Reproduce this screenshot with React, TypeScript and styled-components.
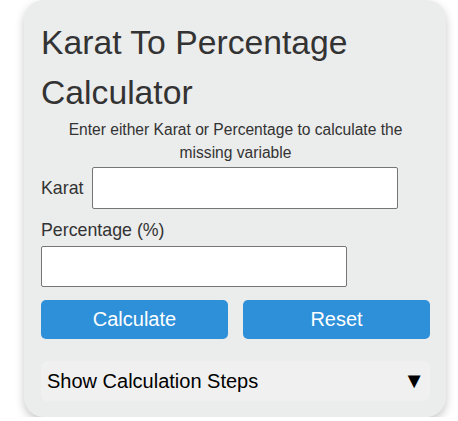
import React from "react";
import styled, { createGlobalStyle } from "styled-components";

const Global = createGlobalStyle`
  html, body {
    margin: 0;
    padding: 0;
    background: #ffffff;
  }
  body {
    font-family: "Liberation Sans", Arial, sans-serif;
  }
`;

const Card = styled.div`
  box-sizing: border-box;
  width: 422px;
  margin-left: 24px;
  padding: 16.5px 16px 16px 17px;
  background: #ebecec;
  border-radius: 20px;
  box-shadow: 0 4px 10px rgba(0, 0, 0, 0.22);
`;

const Title = styled.h1`
  margin: 0;
  font-size: 33.7px;
  line-height: 50px;
  font-weight: 400;
  color: #333333;
`;

const Intro = styled.p`
  margin: 1.5px 0 0;
  padding: 0 12px;
  text-align: center;
  font-size: 15.6px;
  line-height: 23.1px;
  color: #333333;
`;

const InlineField = styled.div`
  display: flex;
  align-items: center;
  gap: 8px;
  margin-top: 3px;
`;

const Label = styled.label<{ $block?: boolean }>`
  display: ${(p) => (p.$block ? "block" : "inline-block")};
  margin-top: ${(p) => (p.$block ? "11px" : "0")};
  font-size: 17.8px;
  line-height: 20px;
  color: #333333;
`;

const Input = styled.input<{ $h: number }>`
  display: block;
  box-sizing: border-box;
  width: 306px;
  height: ${(p) => p.$h}px;
  margin: 0;
  padding: 4px 6px;
  border: 1px solid #767676;
  border-radius: 2px;
  background: #ffffff;
  font-size: 16px;
  font-family: inherit;
`;

const StackedInput = styled(Input)`
  margin-top: 6px;
`;

const Buttons = styled.div`
  display: grid;
  grid-template-columns: 1fr 1fr;
  gap: 15px;
  margin-top: 13px;
`;

const Button = styled.button`
  height: 39px;
  border: none;
  border-radius: 5px;
  background: #2e90d9;
  color: #ffffff;
  font-family: inherit;
  font-size: 20px;
  padding: 0;
  cursor: pointer;
`;

const Steps = styled.div`
  display: flex;
  align-items: center;
  justify-content: space-between;
  height: 40px;
  margin-top: 22px;
  padding: 0 5px 0 6px;
  background: #f0f0f0;
  border-radius: 6px;
  font-size: 20px;
  color: #000000;
`;

const Arrow = styled.span`
  font-size: 22px;
  line-height: 1;
`;

export default function App() {
  return (
    <>
      <Global />
      <Card>
        <Title>Karat To Percentage Calculator</Title>
        <Intro>Enter either Karat or Percentage to calculate the missing variable</Intro>
        <InlineField>
          <Label htmlFor="karat">Karat</Label>
          <Input id="karat" $h={42} />
        </InlineField>
        <Label $block htmlFor="pct">Percentage (%)</Label>
        <StackedInput id="pct" $h={41} />
        <Buttons>
          <Button>Calculate</Button>
          <Button>Reset</Button>
        </Buttons>
        <Steps>
          <span>Show Calculation Steps</span>
          <Arrow>▼</Arrow>
        </Steps>
      </Card>
    </>
  );
}
